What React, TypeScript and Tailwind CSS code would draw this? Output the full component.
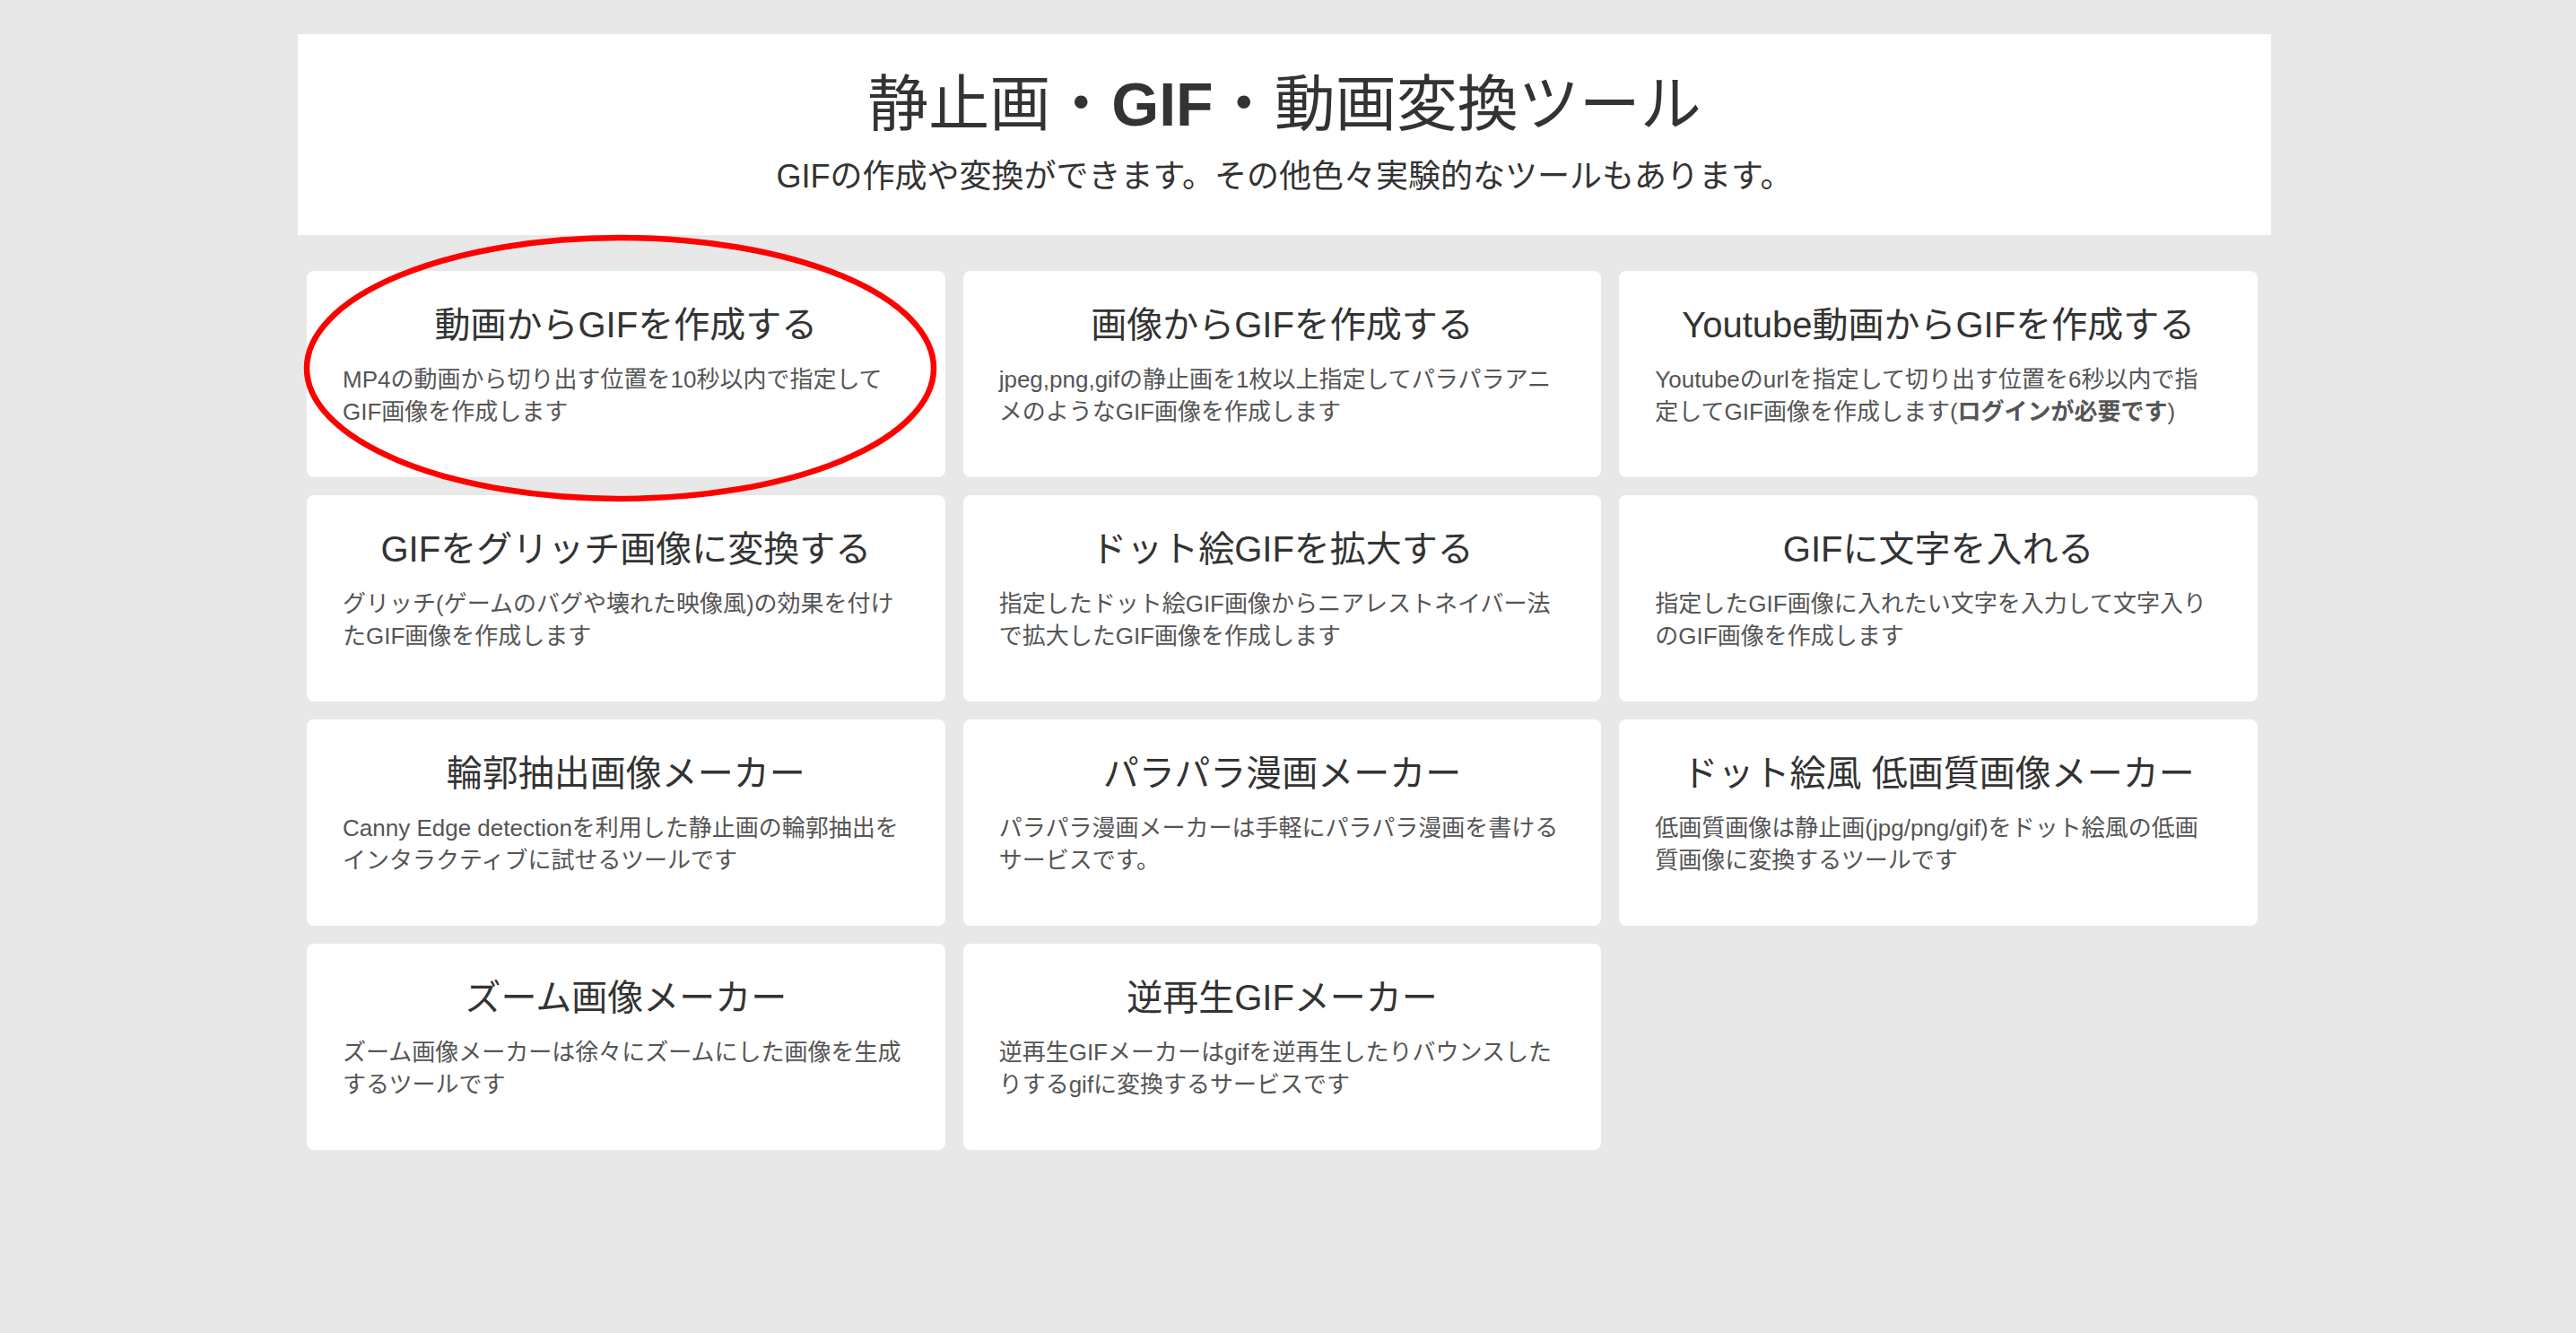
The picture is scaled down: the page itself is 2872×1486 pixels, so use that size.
import React from "react";

type Tool = {
    title: string;
    lines: React.ReactNode[];
};

const tools: Tool[] = [
    {
        title: "動画からGIFを作成する",
        lines: ["MP4の動画から切り出す位置を10秒以内で指定して", "GIF画像を作成します"],
    },
    {
        title: "画像からGIFを作成する",
        lines: ["jpeg,png,gifの静止画を1枚以上指定してパラパラアニ", "メのようなGIF画像を作成します"],
    },
    {
        title: "Youtube動画からGIFを作成する",
        lines: [
            "Youtubeのurlを指定して切り出す位置を6秒以内で指",
            <>
                定してGIF画像を作成します(<b className="font-bold">ログインが必要です</b>)
            </>,
        ],
    },
    {
        title: "GIFをグリッチ画像に変換する",
        lines: ["グリッチ(ゲームのバグや壊れた映像風)の効果を付け", "たGIF画像を作成します"],
    },
    {
        title: "ドット絵GIFを拡大する",
        lines: ["指定したドット絵GIF画像からニアレストネイバー法", "で拡大したGIF画像を作成します"],
    },
    {
        title: "GIFに文字を入れる",
        lines: ["指定したGIF画像に入れたい文字を入力して文字入り", "のGIF画像を作成します"],
    },
    {
        title: "輪郭抽出画像メーカー",
        lines: ["Canny Edge detectionを利用した静止画の輪郭抽出を", "インタラクティブに試せるツールです"],
    },
    {
        title: "パラパラ漫画メーカー",
        lines: ["パラパラ漫画メーカーは手軽にパラパラ漫画を書ける", "サービスです。"],
    },
    {
        title: "ドット絵風 低画質画像メーカー",
        lines: ["低画質画像は静止画(jpg/png/gif)をドット絵風の低画", "質画像に変換するツールです"],
    },
    {
        title: "ズーム画像メーカー",
        lines: ["ズーム画像メーカーは徐々にズームにした画像を生成", "するツールです"],
    },
    {
        title: "逆再生GIFメーカー",
        lines: ["逆再生GIFメーカーはgifを逆再生したりバウンスした", "りするgifに変換するサービスです"],
    },
];

const ToolCard: React.FC<{ tool: Tool }> = ({ tool }) => (
    <a className="block h-[230px] rounded-lg bg-white px-[40px] pt-[38px] cursor-pointer">
        <h3 className="text-center text-[40px] leading-[44px] font-normal text-[#333333] whitespace-nowrap">
            {tool.title}
        </h3>
        <p className="mt-[21px] text-[26px] leading-[36px] text-[#555555]">
            {tool.lines.map((line, i) => (
                <span key={i} className="block whitespace-nowrap">
                    {line}
                </span>
            ))}
        </p>
    </a>
);

export default function App() {
    return (
        <div
            className="relative min-h-[1486px] w-full bg-[#e8e8e8] pt-[38px]"
            style={{ fontFamily: '"Liberation Sans", "Noto Sans CJK JP", sans-serif' }}
        >
            <div className="ml-[332px] w-[2200px]">
                {/* Header */}
                <header className="h-[224px] bg-white pt-[38px] text-center text-[#333333]">
                    <h1 className="text-[68px] leading-[80px] font-normal">
                        静止画・<span className="font-bold">GIF</span>・動画変換ツール
                    </h1>
                    <p className="mt-[19px] text-[36px] leading-[44px]">
                        GIFの作成や変換ができます。その他色々実験的なツールもあります。
                    </p>
                </header>

                {/* Tool grid */}
                <div className="ml-[10px] mt-[40px] grid w-[2175px] grid-cols-3 gap-[20px]">
                    {tools.map((tool) => (
                        <ToolCard key={tool.title} tool={tool} />
                    ))}
                </div>
            </div>

            {/* Red annotation ellipse */}
            <svg
                className="pointer-events-none absolute left-0 top-0"
                width="1100"
                height="600"
                viewBox="0 0 1100 600"
            >
                <ellipse cx="691.5" cy="410.5" rx="349.5" ry="145.5" fill="none" stroke="#ff0000" strokeWidth="6.5" />
            </svg>
        </div>
    );
}
